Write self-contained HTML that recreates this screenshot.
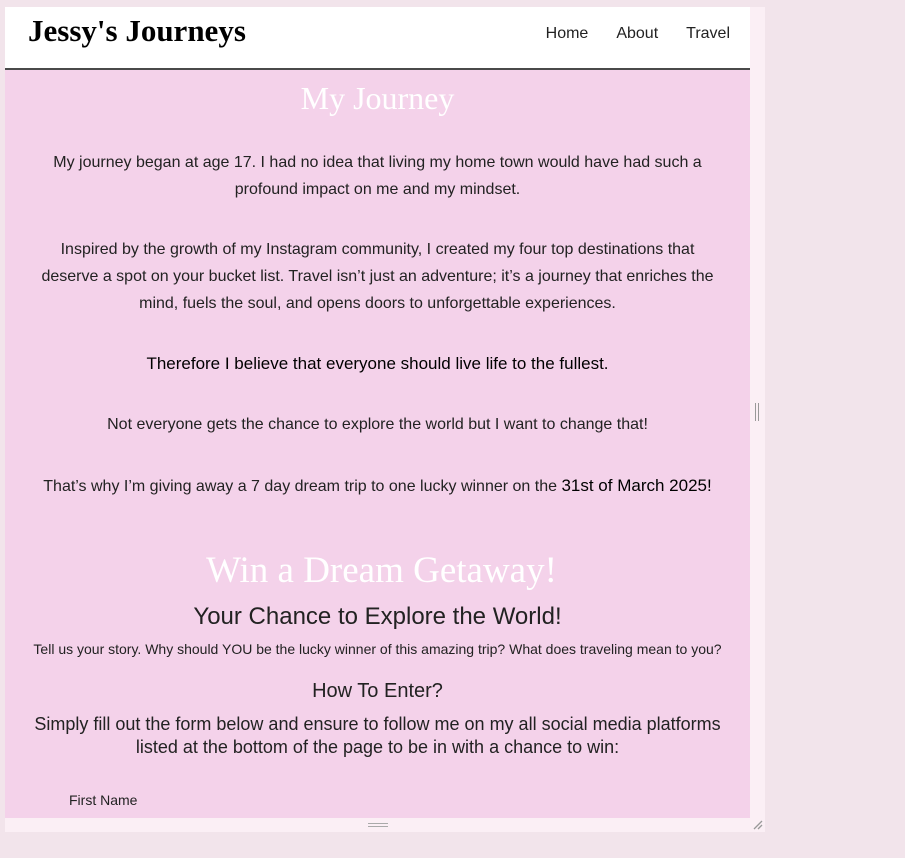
<!DOCTYPE html>
<html><head><meta charset="utf-8"><style>
body{margin:0;background:#f2e4eb;width:905px;height:858px;position:relative;overflow:hidden;font-family:"Liberation Sans",sans-serif;}
#frame{position:absolute;left:5px;top:7px;width:760px;height:825px;background:#fbeff5;}
#hdr{position:absolute;left:0;top:0;width:745px;height:61px;background:#fff;border-bottom:2px solid #4a4a4a;}
#hdr h1{position:absolute;left:23px;top:6px;margin:0;font:bold 31px "Liberation Serif",serif;color:#000;}
#nav{position:absolute;right:20px;top:18px;font-size:16px;color:#222;}
#nav span{margin-left:28px;}
#content{position:absolute;left:0;top:63px;width:745px;height:748px;background:#f4d2ea;overflow:hidden;text-align:center;color:#222;}
.p{position:absolute;left:10px;width:725px;font-size:16px;line-height:27px;}
.serif{font-family:"Liberation Serif",serif;color:#fff;position:absolute;left:0;width:745px;}
.grip{position:absolute;left:750px;top:396px;width:2px;height:18px;border-left:1px solid #999;border-right:1px solid #999;}
</style></head><body>
<div id="frame">
<div id="hdr"><h1>Jessy's Journeys</h1><div id="nav"><span>Home</span><span>About</span><span>Travel</span></div></div>
<div id="content">
<div class="serif" style="top:10px;font-size:32px;">My Journey</div>
<div class="p" style="top:79px;">My journey began at age 17. I had no idea that living my home town would have had such a<br>profound impact on me and my mindset.</div>
<div class="p" style="top:166px;">Inspired by the growth of my Instagram community, I created my four top destinations that<br>deserve a spot on your bucket list. Travel isn’t just an adventure; it’s a journey that enriches the<br>mind, fuels the soul, and opens doors to unforgettable experiences.</div>
<div class="p" style="top:280px;font-size:17px;color:#000;">Therefore I believe that everyone should live life to the fullest.</div>
<div class="p" style="top:341px;">Not everyone gets the chance to explore the world but I want to change that!</div>
<div class="p" style="top:402px;">That’s why I’m giving away a 7 day dream trip to one lucky winner on the <span style="color:#000;font-size:17px">31st of March 2025!</span></div>
<div class="serif" style="top:479px;font-size:37px;left:4px;">Win a Dream Getaway!</div>
<div style="position:absolute;top:533px;width:745px;font-size:24px;">Your Chance to Explore the World!</div>
<div style="position:absolute;top:571px;width:745px;font-size:14px;">Tell us your story. Why should YOU be the lucky winner of this amazing trip? What does traveling mean to you?</div>
<div style="position:absolute;top:610px;width:745px;font-size:20px;">How To Enter?</div>
<div style="position:absolute;top:643px;left:20px;width:705px;font-size:18px;line-height:23px;">Simply fill out the form below and ensure to follow me on my all social media platforms listed at the bottom of the page to be in with a chance to win:</div>
<div style="position:absolute;top:722px;left:64px;font-size:14px;">First Name</div>
</div>
<div class="grip"></div>
<div style="position:absolute;left:363px;top:816px;width:20px;height:2px;border-top:1px solid #aaa;border-bottom:1px solid #aaa;"></div>
<svg style="position:absolute;left:747px;top:812px" width="12" height="12"><path d="M2 10L10 2M6 10L10 6" stroke="#999" stroke-width="1.3"/></svg>
</div>
</body></html>
